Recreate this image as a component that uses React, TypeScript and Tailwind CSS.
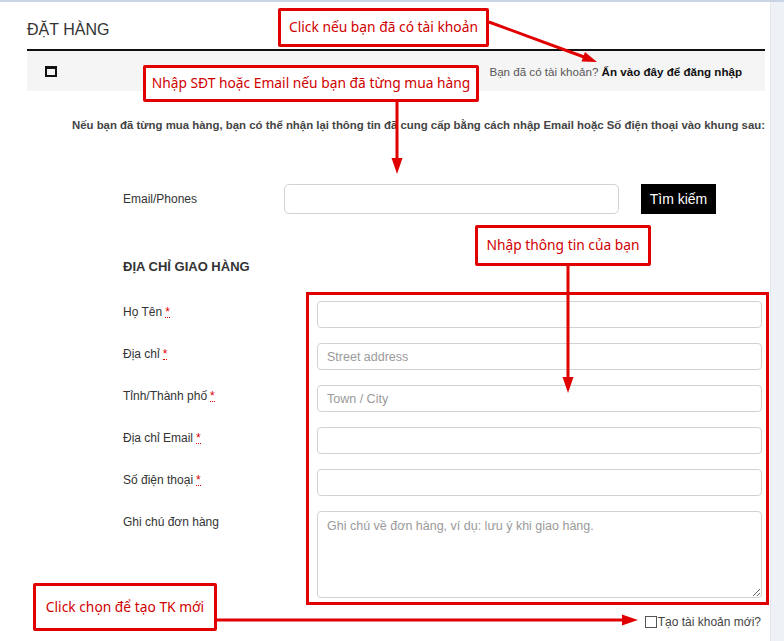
import React from "react";

const red = "#e10000";

function Req() {
  return (
    <abbr className="ml-[3px] text-[#e00000] no-underline border-b border-dotted border-[#e00000] leading-[10px] inline-block">
      *
    </abbr>
  );
}

function Field({ label, required, placeholder }: { label: string; required?: boolean; placeholder?: string }) {
  return (
    <div className="flex items-start">
      <label className="w-[290px] pl-[96px] pt-[3px] text-[12px] leading-[16px] text-[#333] shrink-0 whitespace-nowrap">
        {label}
        {required && <Req />}
      </label>
      <input
        type="text"
        placeholder={placeholder}
        className="w-[445px] h-[27px] rounded-[4px] border border-[#d2d2d2] px-[9px] text-[12.5px] text-[#333] placeholder:text-[#9a9a9a] outline-none"
      />
    </div>
  );
}

function Note({ text, className }: { text: string; className: string }) {
  return (
    <div
      className={
        "absolute flex items-center justify-center border-[3px] border-[#e10000] bg-white text-[13.8px] text-[#d00000] whitespace-nowrap rounded-[2px] " +
        className
      }
      style={{ fontFamily: '"Noto Sans", "Open Sans", sans-serif' }}
    >
      {text}
    </div>
  );
}

export default function App() {
  return (
    <div
      className="relative w-[784px] h-[641px] overflow-hidden bg-white flex flex-col"
      style={{ fontFamily: '"Liberation Sans", Arial, sans-serif' }}
    >
      <div className="h-[2px] bg-[#c8d4e4] shrink-0" />
      <div className="flex flex-1">
        <main className="w-[770px] pl-[27px] pr-[5px]">
          <h1 className="pt-[18px] pb-[9px] border-b-2 border-[#111] text-[16px] leading-[20px] text-[#333]">ĐẶT HÀNG</h1>

          <div className="h-[40px] bg-[#f5f5f5] flex items-center justify-between pl-[18px] pr-[23px]">
            <div className="w-[12px] h-[11px] border-2 border-t-[3px] border-[#111]" />
            <p className="text-[11.6px] text-[#555] pt-[2px]">
              Bạn đã có tài khoản? <span className="font-bold text-[#111]">Ấn vào đây để đăng nhập</span>
            </p>
          </div>

          <p className="mt-[26px] text-right text-[11.4px] leading-[16px] font-bold text-[#444] whitespace-nowrap">
            Nếu bạn đã từng mua hàng, bạn có thể nhận lại thông tin đã cung cấp bằng cách nhập Email hoặc Số điện thoại vào khung sau:
          </p>

          <div className="mt-[51px] flex items-center">
            <label className="w-[257px] pl-[96px] text-[12px] text-[#333] shrink-0">Email/Phones</label>
            <input
              type="text"
              className="w-[335px] h-[30px] rounded-[5px] border border-[#d2d2d2] px-[9px] outline-none"
            />
            <button className="ml-[22px] w-[75px] h-[30px] bg-black text-white text-[14px]">Tìm kiếm</button>
          </div>

          <h2 className="mt-[45px] pl-[96px] text-[13px] leading-[16px] font-bold text-[#333]">ĐỊA CHỈ GIAO HÀNG</h2>

          <div className="mt-[26px] flex flex-col gap-[15px]">
            <Field label="Họ Tên" required />
            <Field label="Địa chỉ" required placeholder="Street address" />
            <Field label="Tỉnh/Thành phố" required placeholder="Town / City" />
            <Field label="Địa chỉ Email" required />
            <Field label="Số điện thoại" required />
            <div className="flex items-start">
              <label className="w-[290px] pl-[96px] pt-[3px] text-[12px] leading-[16px] text-[#333] shrink-0">
                Ghi chú đơn hàng
              </label>
              <textarea
                placeholder="Ghi chú về đơn hàng, ví dụ: lưu ý khi giao hàng."
                className="w-[445px] h-[87px] rounded-[4px] border border-[#d2d2d2] px-[9px] py-[5px] text-[12.5px] text-[#333] placeholder:text-[#9a9a9a] outline-none"
              />
            </div>
          </div>

          <div className="mt-[16px] flex items-center justify-end pr-[4px] text-[12px] leading-[16px] text-[#444]">
            <span className="w-[12px] h-[12px] border border-[#555] bg-white mr-[1px]" />
            Tạo tài khoản mới?
          </div>
        </main>
        <aside className="flex-1 bg-[#eef2f7] border-l border-[#e3e8ef]" />
      </div>

      <svg className="absolute inset-0 pointer-events-none" width="784" height="641">
        <g stroke={red} strokeWidth="3" fill="none">
          <line x1="489" y1="22" x2="584" y2="57" />
          <line x1="397" y1="102" x2="397" y2="160" />
          <line x1="568" y1="266" x2="568" y2="379" />
          <line x1="217" y1="620" x2="623" y2="620" />
        </g>
        <g fill={red}>
          <polygon points="597,62 581.5,61.5 585,52" />
          <polygon points="397,174 391.5,158 402.5,158" />
          <polygon points="568,393 562.5,377 573.5,377" />
          <polygon points="638,620 622,614.5 622,625.5" />
        </g>
      </svg>

      <Note text="Click nếu bạn đã có tài khoản" className="left-[278px] top-[8px] w-[211px] h-[39px]" />
      <Note text="Nhập SĐT hoặc Email nếu bạn đã từng mua hàng" className="left-[143px] top-[65px] w-[336px] h-[37px]" />
      <Note text="Nhập thông tin của bạn" className="left-[475px] top-[225px] w-[176px] h-[41px]" />
      <div className="absolute left-[306px] top-[292px] w-[463px] h-[313px] border-[3px] border-[#e10000] pointer-events-none" />
      <Note text="Click chọn để tạo TK mới" className="left-[33px] top-[583px] w-[184px] h-[48px]" />
    </div>
  );
}
